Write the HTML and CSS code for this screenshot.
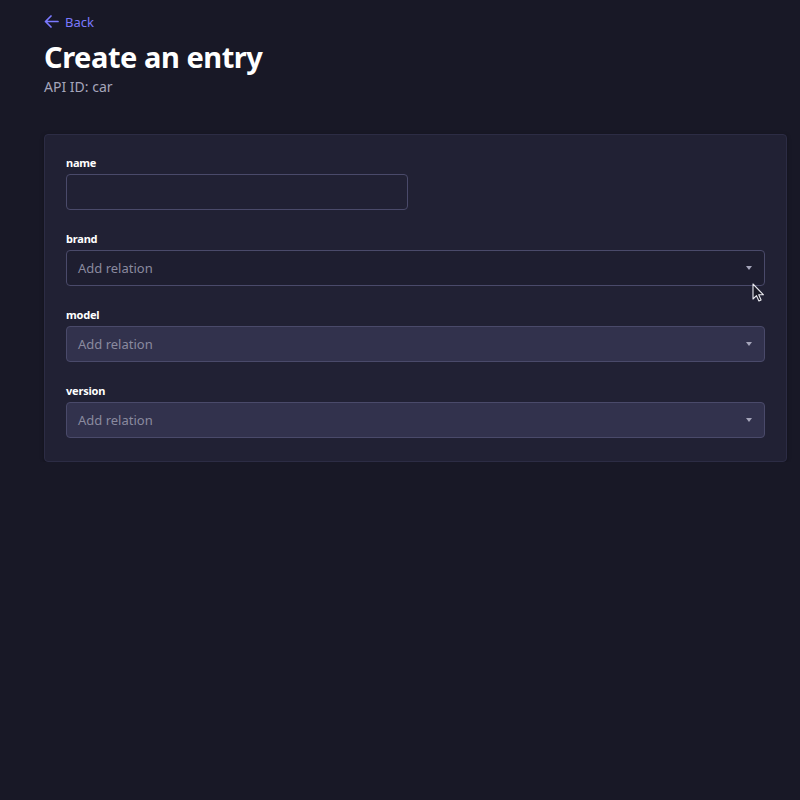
FILE: index.html
```html
<!DOCTYPE html>
<html lang="en">
<head>
<meta charset="utf-8">
<title>Create an entry</title>
<link rel="stylesheet" href="styles.css">
</head>
<body>
<div class="page">
  <header class="header">
    <a class="back" href="#">
      <svg class="back-icon" width="15" height="13" viewBox="0 0 15 13" fill="none" stroke="currentColor" stroke-width="1.7" stroke-linecap="round" stroke-linejoin="round"><path d="M14 6.5H1.5M7 1L1.5 6.5 7 12"/></svg>
      <span>Back</span>
    </a>
    <h1 class="title">Create an entry</h1>
    <p class="subtitle">API ID: car</p>
  </header>
  <main class="card">
    <div class="grid">
      <div class="field half">
        <label class="label">name</label>
        <div class="input"></div>
      </div>
      <div class="field full">
        <label class="label">brand</label>
        <div class="select">
          <span class="placeholder">Add relation</span>
          <span class="caret"></span>
        </div>
      </div>
      <div class="field full">
        <label class="label">model</label>
        <div class="select disabled">
          <span class="placeholder">Add relation</span>
          <span class="caret"></span>
        </div>
      </div>
      <div class="field full">
        <label class="label">version</label>
        <div class="select disabled">
          <span class="placeholder">Add relation</span>
          <span class="caret"></span>
        </div>
      </div>
    </div>
  </main>
</div>
<svg class="cursor" width="14" height="20" viewBox="0 0 14 20"><path d="M1 1v15l3.5-3.3 2.4 5.3 2.2-1-2.4-5.2H11.5z" fill="#1a1a26" stroke="#e8e8ee" stroke-width="1.1" stroke-linejoin="round"/></svg>
</body>
</html>
```

FILE: styles.css
```css
html, body {
  margin: 0;
  padding: 0;
  background: #181826;
  font-family: "Noto Sans", "Open Sans", sans-serif;
  color: #ffffff;
}

.page {
  padding: 0 13px 0 44px;
}

.header {
  padding-top: 11px;
  height: 134px;
  box-sizing: border-box;
}

.back {
  display: inline-flex;
  align-items: center;
  gap: 6px;
  color: #7b79ff;
  text-decoration: none;
  font-size: 13px;
  line-height: 18px;
}

.back-icon {
  display: block;
}

.title {
  margin: 5px 0 0;
  font-size: 29px;
  line-height: 37px;
  font-weight: 700;
  letter-spacing: -0.45px;
}

.subtitle {
  margin: 0;
  font-size: 14px;
  line-height: 23px;
  color: #a5a5ba;
}

.card {
  background: #212134;
  border: 1px solid #2c2c44;
  border-radius: 4px;
  padding: 21px 21px 23px;
  box-shadow: 0 1px 4px rgba(0, 0, 0, 0.3);
}

.grid {
  display: grid;
  grid-template-columns: 1fr 1fr;
  column-gap: 16px;
  row-gap: 22px;
}

.field {
  display: flex;
  flex-direction: column;
  gap: 4px;
}

.half { grid-column: span 1; }
.full { grid-column: 1 / -1; }

.label {
  font-size: 11px;
  line-height: 14px;
  font-weight: 700;
  color: #ffffff;
  letter-spacing: -0.2px;
}

.input,
.select {
  height: 36px;
  box-sizing: border-box;
  border: 1px solid #4a4a6a;
  border-radius: 4px;
  background: #212134;
}

.select {
  display: flex;
  align-items: center;
  justify-content: space-between;
  padding: 0 12px 0 11px;
  background: #1e1e30;
}

.select.disabled {
  background: #32324d;
}

.placeholder {
  font-size: 13px;
  color: #8a8a9f;
}

.caret {
  width: 0;
  height: 0;
  border-left: 3.5px solid transparent;
  border-right: 3.5px solid transparent;
  border-top: 4px solid #a5a5ba;
}

.cursor {
  position: absolute;
  left: 752px;
  top: 283px;
}
```
